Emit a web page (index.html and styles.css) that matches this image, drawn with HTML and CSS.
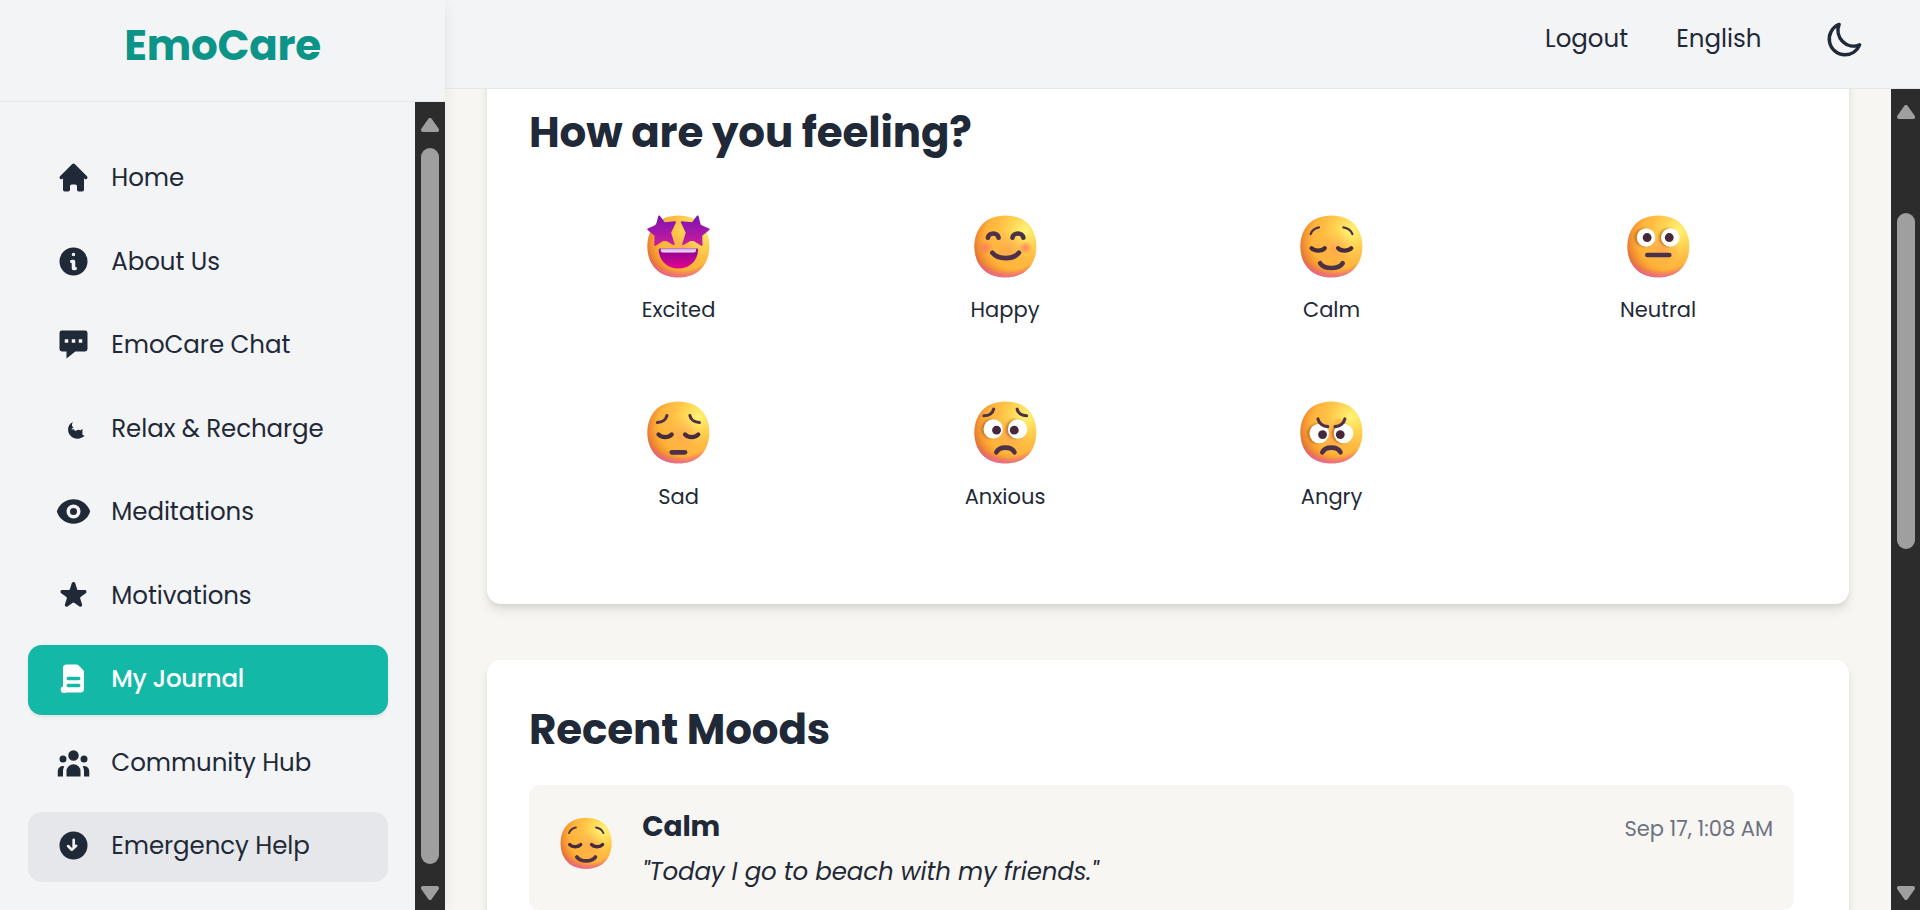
FILE: index.html
```
<!DOCTYPE html>
<html lang="en">
<head>
<meta charset="utf-8">
<title>EmoCare - My Journal</title>
<link rel="stylesheet" href="styles.css">
</head>
<body>
<svg class="defs" width="0" height="0" aria-hidden="true">
  <defs>
    <radialGradient id="g-base" gradientUnits="userSpaceOnUse" cx="25" cy="9" r="23">
      <stop offset="0" stop-color="#fff478"/>
      <stop offset=".28" stop-color="#ffd654"/>
      <stop offset=".55" stop-color="#ffbb42"/>
      <stop offset="1" stop-color="#ffae34"/>
    </radialGradient>
    <radialGradient id="g-left" gradientUnits="userSpaceOnUse" cx="20" cy="13" r="19.5">
      <stop offset=".66" stop-color="#f08423" stop-opacity="0"/>
      <stop offset="1" stop-color="#d9603f" stop-opacity=".9"/>
    </radialGradient>
    <radialGradient id="g-bottom" gradientUnits="userSpaceOnUse" cx="17" cy="8" r="23">
      <stop offset=".82" stop-color="#f0588c" stop-opacity="0"/>
      <stop offset="1" stop-color="#e867c4"/>
    </radialGradient>
    <radialGradient id="g-center" gradientUnits="userSpaceOnUse" cx="18" cy="17" r="8">
      <stop offset="0" stop-color="#ff9a56" stop-opacity=".6"/>
      <stop offset="1" stop-color="#ffa84d" stop-opacity="0"/>
    </radialGradient>
    <radialGradient id="g-blush">
      <stop offset="0" stop-color="#ff6a6a" stop-opacity=".75"/>
      <stop offset="1" stop-color="#ff7a5c" stop-opacity="0"/>
    </radialGradient>
    <linearGradient id="g-star" gradientUnits="userSpaceOnUse" x1="0" y1="2" x2="0" y2="16">
      <stop offset="0" stop-color="#7a12b8"/>
      <stop offset="1" stop-color="#cf1d98"/>
    </linearGradient>
    <linearGradient id="g-mouth" gradientUnits="userSpaceOnUse" x1="0" y1="17" x2="0" y2="26">
      <stop offset="0" stop-color="#8a0398"/>
      <stop offset="1" stop-color="#e2058b"/>
    </linearGradient>
    <linearGradient id="g-teeth" gradientUnits="userSpaceOnUse" x1="0" y1="17" x2="0" y2="19">
      <stop offset="0" stop-color="#cda6e6"/>
      <stop offset="1" stop-color="#f6ecff"/>
    </linearGradient>
    <g id="face">
      <path fill="url(#g-base)" d="M16 30C25.33 30 30 23.73 30 16S25.33 2 16 2 2 8.27 2 16s4.67 14 14 14Z"/>
      <path fill="url(#g-center)" d="M16 30C25.33 30 30 23.73 30 16S25.33 2 16 2 2 8.27 2 16s4.67 14 14 14Z"/>
      <path fill="url(#g-left)" d="M16 30C25.33 30 30 23.73 30 16S25.33 2 16 2 2 8.27 2 16s4.67 14 14 14Z"/>
      <path fill="url(#g-bottom)" d="M16 30C25.33 30 30 23.73 30 16S25.33 2 16 2 2 8.27 2 16s4.67 14 14 14Z"/>
    </g>
    <symbol id="calm" viewBox="0 0 32 32">
      <use href="#face"/>
      <g class="ink">
        <path class="thin" d="M6.600 10.500C7.200 8.800 8.600 7.700 10.400 7.400M25.500 10.500C24.900 8.800 23.300 7.700 21.400 7.400"/>
        <path class="lid" d="M7 16.800C8.400 18.300 11.700 18.300 13 16.800M19 16.800C20.300 18.300 23.600 18.300 25 16.800"/>
        <path class="mid" d="M10.900 23.600C12.800 26.500 19.200 26.500 21.100 23.600"/>
      </g>
    </symbol>
  </defs>
</svg>

<div class="app">
  <aside class="sidebar">
    <div class="brand">EmoCare</div>
    <div class="side-body">
      <nav class="nav">
        <a class="nav-item"><svg class="nav-icon" viewBox="0 0 20 20"><path d="M10.707 2.293a1 1 0 00-1.414 0l-7 7a1 1 0 001.414 1.414L4 10.414V17a1 1 0 001 1h2a1 1 0 001-1v-2a1 1 0 011-1h2a1 1 0 011 1v2a1 1 0 001 1h2a1 1 0 001-1v-6.586l.293.293a1 1 0 001.414-1.414l-7-7z"/></svg>Home</a>
        <a class="nav-item"><svg class="nav-icon" viewBox="0 0 20 20"><path fill-rule="evenodd" d="M18 10a8 8 0 11-16 0 8 8 0 0116 0zm-7-4a1 1 0 11-2 0 1 1 0 012 0zM9 9a1 1 0 000 2v3a1 1 0 001 1h1a1 1 0 100-2v-3a1 1 0 00-1-1H9z"/></svg>About Us</a>
        <a class="nav-item"><svg class="nav-icon" viewBox="0 0 20 20"><path fill-rule="evenodd" d="M3.400 2h13.200A1.400 1.400 0 0118 3.400v9.200A1.400 1.400 0 0116.600 14H11l-5 4v-4H3.400A1.400 1.400 0 012 12.600V3.400A1.400 1.400 0 013.400 2zM5 7v2h2V7H5zm4 0v2h2V7H9zm4 0v2h2V7h-2z"/></svg>EmoCare Chat</a>
        <a class="nav-item"><svg class="nav-icon" viewBox="0 0 20 20"><path d="M9.700 6.300C7.900 7 6.900 8.600 6.900 10.500c0 3 2.400 5.300 5.400 5.300 1.600 0 3-.5 4-1.600l-1.200-.7V10.200l-.9.800-1.600-.3-1.600.7-.9-1-1.300.2C9 10 9.700 9.700 10 9.300L9.200 8.700c-.2-.9 0-1.700.5-2.400z"/></svg>Relax &amp; Recharge</a>
        <a class="nav-item"><svg class="nav-icon" viewBox="0 0 20 20"><path d="M10 12a2 2 0 100-4 2 2 0 000 4z"/><path fill-rule="evenodd" d="M.458 10C1.732 5.943 5.522 3 10 3s8.268 2.943 9.542 7c-1.274 4.057-5.064 7-9.542 7S1.732 14.057.458 10zM14 10a4 4 0 11-8 0 4 4 0 018 0z"/></svg>Meditations</a>
        <a class="nav-item"><svg class="nav-icon" viewBox="0 0 20 20"><path d="M9.049 2.927c.3-.921 1.603-.921 1.902 0l1.070 3.292a1 1 0 00.95.69h3.462c.969 0 1.371 1.240.588 1.810l-2.800 2.034a1 1 0 00-.364 1.118l1.070 3.292c.3.921-.755 1.688-1.540 1.118l-2.800-2.034a1 1 0 00-1.175 0l-2.800 2.034c-.784.57-1.838-.197-1.539-1.118l1.070-3.292a1 1 0 00-.364-1.118L2.980 8.720c-.783-.57-.38-1.810.588-1.810h3.461a1 1 0 00.951-.69l1.070-3.292z"/></svg>Motivations</a>
        <a class="nav-item is-active"><svg class="nav-icon" viewBox="0 0 20 20"><path fill-rule="evenodd" d="M4 4a2 2 0 012-2h5.600a2 2 0 011.400.6L15.400 5A2 2 0 0116 6.400V16a2 2 0 01-2 2H6c-.4 0-.6.300-1.200.300A1.900 1.900 0 014 14.600zM7 9a1 1 0 000 2h6a1 1 0 100-2H7zM7 13a1 1 0 000 2h6a1 1 0 100-2H7z"/></svg>My Journal</a>
        <a class="nav-item"><svg class="nav-icon" viewBox="0 0 20 20"><path d="M13 6a3 3 0 11-6 0 3 3 0 016 0zM18 8a2 2 0 11-4 0 2 2 0 014 0zM14 15a4 4 0 00-8 0v3h8v-3zM6 8a2 2 0 11-4 0 2 2 0 014 0zM16 18v-3a5.972 5.972 0 00-.75-2.906A3.005 3.005 0 0119 15v3h-3zM4.750 12.094A5.973 5.973 0 004 15v3H1v-3a3 3 0 013.750-2.906z"/></svg>Community Hub</a>
        <a class="nav-item is-hover"><svg class="nav-icon" viewBox="0 0 20 20"><circle cx="10" cy="10" r="8"/><path class="cut" d="M10.100 6.800V11.300M9 12.400L6.900 10.300M9 12.400L11.500 10.200"/></svg>Emergency Help</a>
      </nav>
      <div class="scrollbar">
        <svg class="arrow" viewBox="0 0 18 14"><path d="M9 2 16 12H2Z"/></svg>
        <div class="thumb side-thumb"></div>
        <svg class="arrow" viewBox="0 0 18 14"><path d="M9 12 2 2H16Z"/></svg>
      </div>
    </div>
  </aside>

  <div class="content">
    <header class="topbar">
      <a class="top-link">Logout</a>
      <a class="top-link">English</a>
      <svg class="moon" viewBox="0 0 24 24"><path d="M20.354 15.354A9 9 0 018.646 3.646 9.003 9.003 0 0012 21a9.003 9.003 0 008.354-5.646z"/></svg>
    </header>
    <div class="page">
      <main class="main">
        <section class="card feelings">
          <h2 class="title">How are you feeling?</h2>
          <div class="moods">
            <div class="mood">
              <svg class="emoji" viewBox="0 0 32 32"><use href="#face"/>
                <path class="star" d="M7.300 2.400 9.700 5.500 14.500 5 12.300 9.800 13.900 15 9.800 12.700 5.500 15.400 5.600 11 2.300 8.300 6.200 6.600Z"/>
                <path class="star" d="M24.700 2.400 22.300 5.500 17.500 5 19.700 9.800 18.100 15 22.200 12.700 26.500 15.400 26.400 11 29.700 8.300 25.800 6.600Z"/>
                <path fill="url(#g-mouth)" d="M7.700 17H24.300Q24.900 17 24.900 17.600C24.600 22.700 21 26 16 26S7.400 22.700 7.100 17.600Q7.100 17 7.700 17Z"/>
                <path fill="url(#g-teeth)" d="M8 17H24V17.700Q24 18.800 22.900 18.800H9.100Q8 18.800 8 17.700Z"/>
              </svg>
              <span class="label">Excited</span>
            </div>
            <div class="mood">
              <svg class="emoji" viewBox="0 0 32 32"><use href="#face"/>
                <circle cx="7" cy="16.600" r="3.600" fill="url(#g-blush)"/><circle cx="25.200" cy="16.600" r="3.200" fill="url(#g-blush)"/>
                <g class="ink"><path class="mid" d="M8.100 12.100C8.300 9.500 12.700 9.500 12.900 12.100M19.200 12.100C19.400 9.500 23.900 9.500 24.100 12.100M10.100 18.900C12.700 22.100 19.500 22.100 22.100 18.900"/></g>
              </svg>
              <span class="label">Happy</span>
            </div>
            <div class="mood">
              <svg class="emoji"><use href="#calm"/></svg>
              <span class="label">Calm</span>
            </div>
            <div class="mood">
              <svg class="emoji" viewBox="0 0 32 32"><use href="#face"/>
                <g class="eyes"><circle cx="10.400" cy="12" r="4.200"/><circle cx="21.400" cy="12" r="4.200"/></g>
                <circle class="pupil" cx="10.900" cy="12" r="2"/><circle class="pupil" cx="20.900" cy="12" r="2"/>
                <path class="ink mid" d="M11 19.900H20.900"/>
              </svg>
              <span class="label">Neutral</span>
            </div>
            <div class="mood">
              <svg class="emoji" viewBox="0 0 32 32"><use href="#face"/>
                <g class="ink">
                  <path class="brow" d="M6.500 11.500C8.700 11.500 10.400 10.300 10.800 8.400M25.500 11.500C23.300 11.500 21.600 10.300 21.200 8.400"/>
                  <path class="lid" d="M7 16.900C8.400 18.500 11.700 18.500 13 16.900M19 16.900C20.300 18.500 23.600 18.500 25 16.900"/>
                  <path class="mid" d="M13 25H19"/>
                </g>
              </svg>
              <span class="label">Sad</span>
            </div>
            <div class="mood">
              <svg class="emoji" viewBox="0 0 32 32"><use href="#face"/>
                <g class="eyes"><circle cx="10.500" cy="14.500" r="4.400"/><circle cx="21.500" cy="14.500" r="4.400"/></g>
                <circle class="pupil" cx="12" cy="15" r="2"/><circle class="pupil" cx="20" cy="15" r="2"/>
                <g class="ink">
                  <path class="brow" d="M6.300 8.500C8.500 8.500 10.200 7.300 10.700 5.500M25.600 8.500C23.400 8.500 21.700 7.300 21.300 5.500"/>
                  <path class="mid" d="M11.900 25C13.300 22.200 18.700 22.200 20.100 25"/>
                </g>
              </svg>
              <span class="label">Anxious</span>
            </div>
            <div class="mood">
              <svg class="emoji" viewBox="0 0 32 32"><use href="#face"/>
                <g class="eyes"><circle cx="10.500" cy="16.500" r="4.400"/><circle cx="21.500" cy="16.500" r="4.400"/></g>
                <path class="lid-cover" d="M9.800 10.300C10.800 12.500 12.500 13.500 14.800 13.600L14.300 10ZM22.200 10.300C21.200 12.500 19.500 13.500 17.200 13.600L17.700 10Z"/>
                <circle class="pupil" cx="12" cy="17" r="2"/><circle class="pupil" cx="20" cy="17" r="2"/>
                <g class="ink">
                  <path class="brow" d="M9.900 9.900C10.400 12 12.300 13.300 14.400 13.400M22.100 9.900C21.600 12 19.700 13.300 17.600 13.400"/>
                  <path class="mid" d="M11.900 25C13.300 22.200 18.700 22.200 20.100 25"/>
                </g>
              </svg>
              <span class="label">Angry</span>
            </div>
          </div>
        </section>

        <section class="card recent">
          <h2 class="title">Recent Moods</h2>
          <article class="entry">
            <svg class="entry-emoji"><use href="#calm"/></svg>
            <div class="entry-body">
              <div class="entry-head">
                <strong class="entry-mood">Calm</strong>
                <time class="entry-time">Sep 17, 1:08 AM</time>
              </div>
              <p class="entry-note">"Today I go to beach with my friends."</p>
            </div>
          </article>
        </section>
      </main>
      <div class="scrollbar page-scrollbar">
        <svg class="arrow" viewBox="0 0 18 14"><path d="M9 2 16 12H2Z"/></svg>
        <div class="thumb page-thumb"></div>
        <svg class="arrow page-down" viewBox="0 0 18 14"><path d="M9 12 2 2H16Z"/></svg>
      </div>
    </div>
  </div>
</div>
</body>
</html>
```
FILE: styles.css
```
* { box-sizing: border-box; }

body {
  margin: 0;
  height: 910px;
  overflow: hidden;
  font-family: Poppins, Inter, "Open Sans", sans-serif;
  font-size: 24.5px;
  color: #1f2937;
  background: #f8f6f2;
}

.defs { position: absolute; }

.app { display: flex; height: 910px; }

/* Sidebar */
.sidebar {
  display: flex;
  flex-direction: column;
  flex: none;
  width: 445px;
  height: 910px;
  background: #f3f4f6;
  box-shadow: 0 4px 14px rgba(0, 0, 0, .07);
  z-index: 2;
}

.brand {
  flex: none;
  height: 102px;
  padding-top: 21px;
  border-bottom: 1px solid #e5e7eb;
  text-align: center;
  font-size: 42px;
  font-weight: 700;
  line-height: 50px;
  letter-spacing: -.25px;
  color: #0d9488;
}

.side-body { display: flex; flex: 1; min-height: 0; }

.nav {
  display: flex;
  flex-direction: column;
  flex: 1;
  gap: 13.5px;
  padding: 42px 27px 0 28px;
}

.nav-item {
  display: flex;
  align-items: center;
  flex: none;
  gap: 20.3px;
  height: 70px;
  padding: 0 0 2.5px 28px;
  border-radius: 14px;
  letter-spacing: -.08px;
}

.nav-icon { width: 35px; height: 35px; fill: currentColor; }

.cut {
  fill: none;
  stroke: #f3f4f6;
  stroke-width: 1.5;
  stroke-linecap: round;
  stroke-linejoin: round;
}

.is-active {
  background: #14b8a6;
  color: #fff;
  font-weight: 500;
  letter-spacing: -.35px;
  box-shadow: 0 1.75px 3.5px rgba(0, 0, 0, .08);
}

.is-hover { background: #e5e7eb; }

/* Scrollbars */
.scrollbar {
  display: flex;
  flex-direction: column;
  align-items: center;
  flex: none;
  width: 30px;
  padding: 16px 0 10px;
  background: #2c2c2c;
}

.arrow {
  width: 18px;
  height: 14px;
  fill: #9f9f9f;
  stroke: #9f9f9f;
  stroke-width: 4;
  stroke-linejoin: round;
}

.thumb { width: 18px; border-radius: 9px; background: #9f9f9f; }
.side-thumb { height: 716px; margin: 16px 0 22px; }
.page-scrollbar { width: 29px; padding-left: 1px; }
.page-thumb { height: 336px; margin-top: 94px; }
.page-down { margin-top: auto; }

/* Top bar */
.content { display: flex; flex-direction: column; flex: 1; min-width: 0; }

.topbar {
  display: flex;
  align-items: center;
  justify-content: flex-end;
  flex: none;
  height: 89px;
  padding: 0 54px 10px 0;
  border-bottom: 1px solid #e5e7eb;
  background: #f3f4f6;
}

.top-link { margin-right: 48px; padding-bottom: 2px; }
.top-link + .top-link { margin-right: 62.5px; }

.moon {
  width: 42px;
  height: 42px;
  fill: none;
  stroke: #1f2937;
  stroke-width: 2;
  stroke-linejoin: round;
}

/* Page */
.page { display: flex; flex: 1; min-height: 0; }

.main {
  display: flex;
  flex-direction: column;
  flex: 1;
  gap: 56px;
  padding: 0 42px;
  overflow: hidden;
}

.card {
  flex: none;
  padding: 42px;
  border-radius: 14px;
  background: #fff;
  box-shadow: 0 7px 10.5px -1.75px rgba(0, 0, 0, .1), 0 3.5px 7px -3.5px rgba(0, 0, 0, .1);
}

.feelings { margin-top: -25.7px; padding-bottom: 61.9px; }
.recent { height: 320px; padding-right: 55px; }

.title {
  margin: 0;
  font-size: 42px;
  font-weight: 700;
  line-height: 56px;
  letter-spacing: -.14px;
}

.moods {
  display: grid;
  grid-template-columns: repeat(4, 1fr);
  grid-auto-rows: 158.5px;
  gap: 28px;
  margin-top: 36px;
}

.mood {
  display: flex;
  flex-direction: column;
  align-items: center;
  gap: 12.6px;
  padding: 13.6px 0 0 .6px;
}

.emoji { width: 70.8px; height: 70.8px; }
.label { font-size: 21px; line-height: 31.5px; }

/* Emoji strokes and fills */
.ink { fill: none; stroke: #4d3148; stroke-linecap: round; stroke-linejoin: round; }
.thin { stroke-width: 1; }
.brow { stroke-width: 1.4; }
.lid { stroke-width: 1.9; stroke: #452c3c; }
.mid { stroke-width: 2.1; }
.star { fill: url(#g-star); stroke: url(#g-star); stroke-width: .8; stroke-linejoin: round; }
.eyes { fill: #fff; filter: drop-shadow(-.3px .4px .4px rgba(160, 80, 10, .6)); }
.pupil { fill: #45293a; }
.lid-cover { fill: #ffbc43; }

/* Recent moods */
.entry {
  display: flex;
  gap: 27.5px;
  height: 124.7px;
  margin-top: 27px;
  padding: 20.5px 21px 0 27.5px;
  border-radius: 10.5px;
  background: #f8f6f2;
}

.entry-emoji { flex: none; width: 58.3px; height: 58.3px; margin-top: 8.7px; }
.entry-body { flex: 1; }
.entry-head { display: flex; align-items: baseline; justify-content: space-between; }
.entry-mood { font-size: 28px; font-weight: 700; line-height: 42px; letter-spacing: -.1px; }
.entry-time { font-size: 21px; color: #6b7280; }
.entry-note {
  margin: 6.5px 0 0;
  font-style: italic;
  line-height: 36.75px;
  letter-spacing: -.14px;
}
```
